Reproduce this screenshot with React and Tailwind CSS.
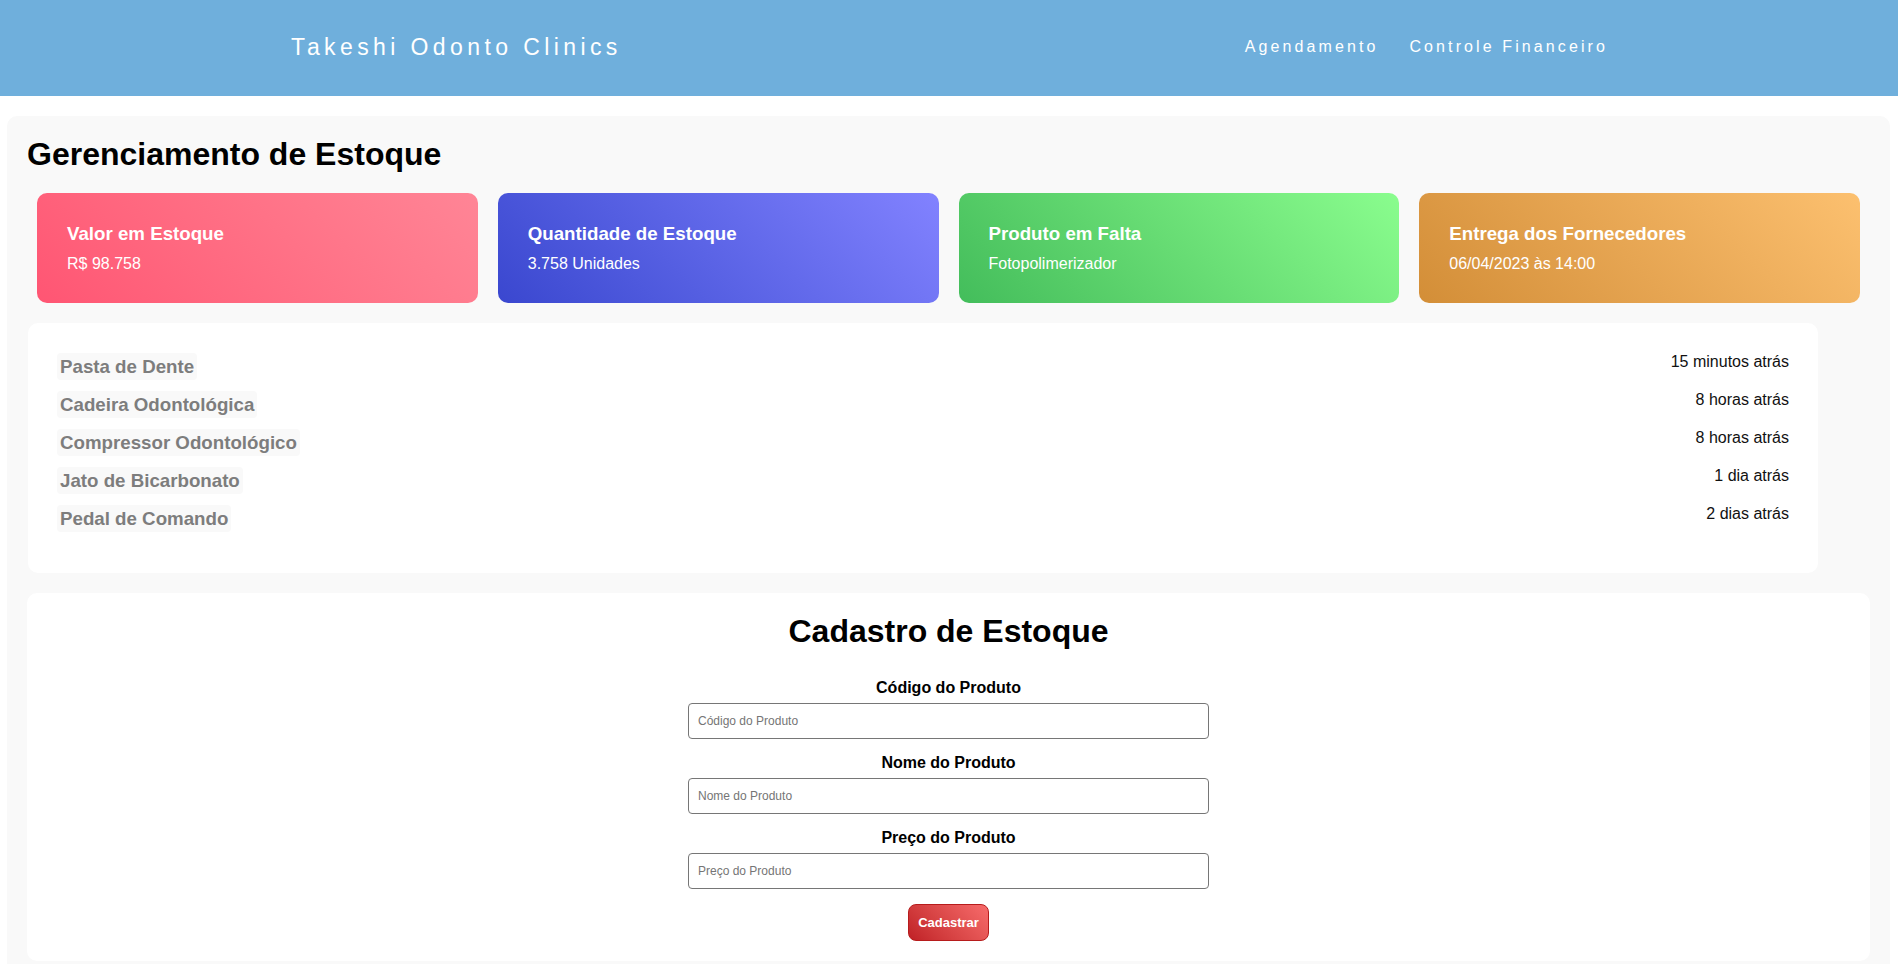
const cards = [
  {
    title: 'Valor em Estoque',
    value: 'R$ 98.758',
    className: 'from-[#ff5573] to-[#ff8596]',
  },
  {
    title: 'Quantidade de Estoque',
    value: '3.758 Unidades',
    className: 'from-[#3a47cf] to-[#8282ff]',
  },
  {
    title: 'Produto em Falta',
    value: 'Fotopolimerizador',
    className: 'from-[#43bd5b] to-[#8afd8e]',
  },
  {
    title: 'Entrega dos Fornecedores',
    value: '06/04/2023 às 14:00',
    className: 'from-[#d38e37] to-[#fcc06f]',
  },
]

const recent = [
  { name: 'Pasta de Dente', when: '15 minutos atrás' },
  { name: 'Cadeira Odontológica', when: '8 horas atrás' },
  { name: 'Compressor Odontológico', when: '8 horas atrás' },
  { name: 'Jato de Bicarbonato', when: '1 dia atrás' },
  { name: 'Pedal de Comando', when: '2 dias atrás' },
]

const fields = ['Código do Produto', 'Nome do Produto', 'Preço do Produto']

function Header() {
  return (
    <header className="flex h-[96px] items-center justify-between bg-[#6fafdc] pb-[2px] pl-[291px] pr-[290px] text-white">
      <span className="text-[23px] leading-[26px] tracking-[4.4px]">Takeshi Odonto Clinics</span>
      <nav className="flex gap-[31px] text-[16px] leading-[18px] tracking-[3.1px]">
        <a href="#">Agendamento</a>
        <a href="#">Controle Financeiro</a>
      </nav>
    </header>
  )
}

function StatCard({ title, value, className }) {
  return (
    <div className={`m-[10px] flex-1 rounded-[10px] bg-linear-45 p-[30px] text-white ${className}`}>
      <h3 className="mb-[10px] text-[18.72px] font-bold leading-[21.5px]">{title}</h3>
      <p className="text-[16px] leading-[18.4px]">{value}</p>
    </div>
  )
}

export default function App() {
  return (
    <div className="min-h-screen bg-white font-['Liberation_Sans',Arial,sans-serif] text-black">
      <Header />

      <main className="ml-[7px] mr-[8px] mt-[20px] rounded-[10px] bg-[#f9f9f9] p-[20px]">
        <h1 className="mb-[10px] text-[32px] font-bold leading-[37px]">Gerenciamento de Estoque</h1>

        <div className="flex">
          {cards.map((c) => (
            <StatCard key={c.title} {...c} />
          ))}
        </div>

        {/* últimas movimentações */}
        <section className="ml-[1px] mt-[10px] w-[1790px] rounded-[10px] bg-white px-[29px] pb-[30px] pt-[30px]">
          {recent.map((r) => (
            <div key={r.name} className="mb-[10px] flex h-[28px] items-start justify-between">
              <span className="rounded-[4px] bg-[#f9f9f9] p-[3px] text-[18.72px] font-bold leading-[21.5px] text-[#7d7d7d]">
                {r.name}
              </span>
              <span className="text-[16px] leading-[18px] text-[#111]">{r.when}</span>
            </div>
          ))}
        </section>

        <section className="mt-[20px] flex flex-col items-center rounded-[10px] bg-white p-[20px]">
          <h2 className="text-[32px] font-bold leading-[37px]">Cadastro de Estoque</h2>
          <form className="mt-[29px] flex flex-col items-center" onSubmit={(e) => e.preventDefault()}>
            {fields.map((f, i) => (
              <div key={f} className={`flex flex-col items-center ${i > 0 ? 'mt-[15px]' : ''}`}>
                <label className="text-[16px] font-bold leading-[18px]">{f}</label>
                <input
                  type="text"
                  placeholder={f}
                  className="mt-[6px] h-[36px] w-[521px] rounded-[4px] border border-[#767676] bg-white px-[9px] text-[12px] placeholder:text-[#757575]"
                />
              </div>
            ))}
            <button
              type="submit"
              className="mt-[15px] h-[37px] rounded-[8px] border border-[#b71c1c] bg-linear-45 from-[#c01f26] to-[#f76b6b] px-[9px] text-[13px] font-bold text-white"
            >
              Cadastrar
            </button>
          </form>
        </section>
      </main>
    </div>
  )
}
